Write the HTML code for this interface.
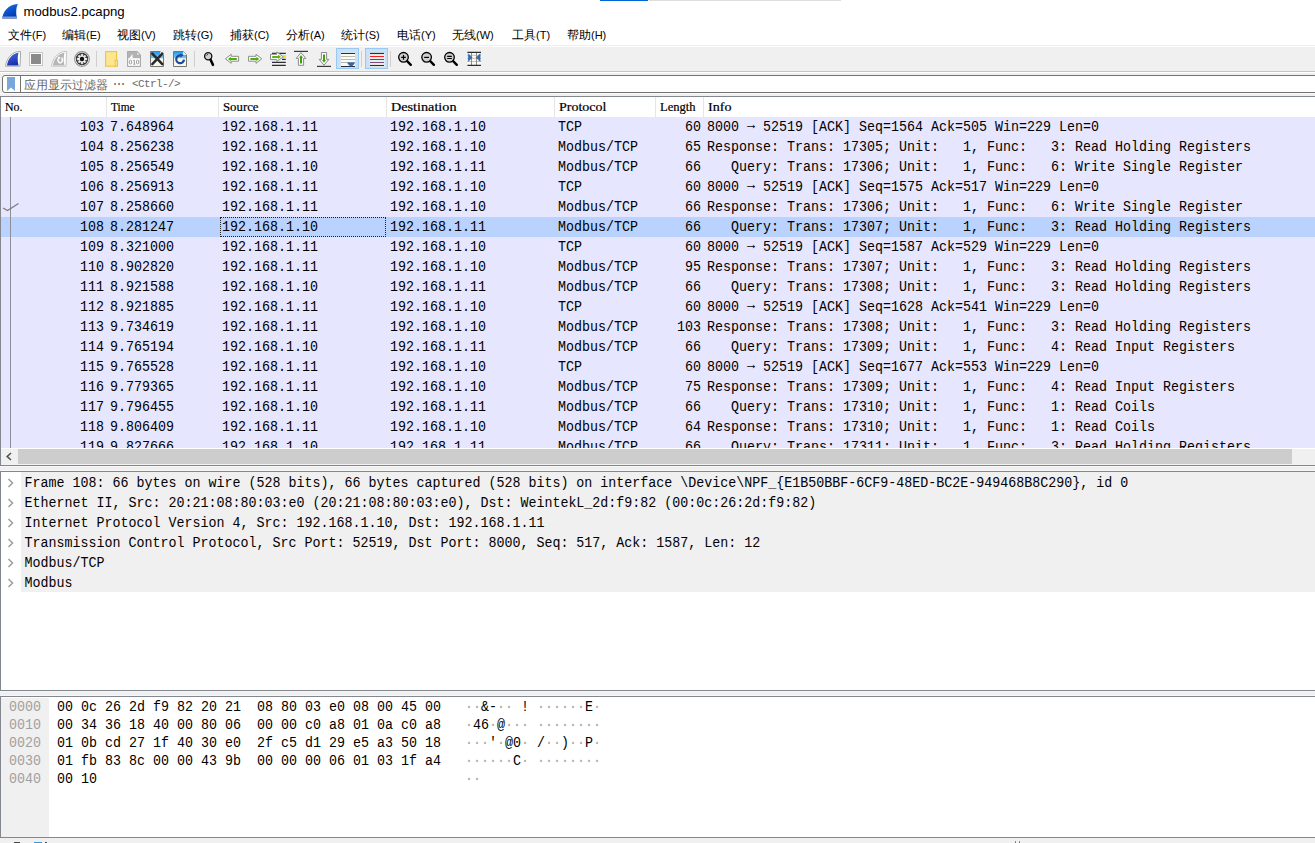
<!DOCTYPE html><html><head><meta charset="utf-8"><title>modbus2.pcapng</title><style>
*{margin:0;padding:0;box-sizing:border-box}
html,body{width:1315px;height:843px;overflow:hidden;background:#fff;position:relative;font-family:"Liberation Sans",sans-serif;color:#000}
.a{position:absolute}
.m{font-family:"Liberation Mono",monospace;white-space:pre}
.menu{top:26px;height:18px;font-size:12px;line-height:18px;white-space:nowrap}
.ph{top:97px;height:20px;font-family:"Liberation Serif",serif;font-size:12px;line-height:20px;transform-origin:0 0;-webkit-text-stroke:0.2px #000;white-space:pre}
.sep{top:97px;width:1px;height:20px;background:#e5e5e5}
.row{left:1px;width:1314px;height:20px;background:#e7e6ff}
.sel{background:#b9d3fe}
.c{font-family:"Liberation Mono",monospace;white-space:pre;font-size:13.33px;line-height:20px;top:0;transform-origin:0 4px;transform:scaleY(1.1)}
.dr{left:21px;width:1294px;height:20px;background:#f0f0f0}
.dt{font-family:"Liberation Mono",monospace;white-space:pre;font-size:13.33px;line-height:20px;left:3.5px;top:1px;transform-origin:0 5px;transform:scaleY(1.1)}
.hx{font-family:"Liberation Mono",monospace;white-space:pre;font-size:13.33px;line-height:18px;transform-origin:0 4px;transform:scaleY(1.1)}
</style></head><body>
<div class="a" style="left:600px;top:0;width:48px;height:1px;background:#0067d0"></div>
<div class="a" style="left:649px;top:0;width:192px;height:1px;background:#dedede"></div>
<svg class="a" style="left:0;top:0" width="22" height="22" viewBox="0 0 22 22"><defs><linearGradient id="fin" x1="0" y1="0" x2="0.6" y2="1"><stop offset="0" stop-color="#1a78e8"/><stop offset="1" stop-color="#0038b0"/></linearGradient><linearGradient id="finb" x1="0" y1="0" x2="0" y2="1"><stop offset="0" stop-color="#5d8ee6" stop-opacity="0"/><stop offset="0.5" stop-color="#7fa2e6"/><stop offset="1" stop-color="#8a92a8"/></linearGradient></defs><path d="M2.2 18.4 C3 11.5 8 4.6 17.8 3.9 C16.2 7 15.6 12 16.9 18.4 Z" fill="url(#fin)"/><path d="M2.6 15.8 H16.7 L16.9 18.4 H2.2 Z" fill="url(#finb)"/></svg>
<div class="a" style="left:23.5px;top:3.6px;font-size:13.2px;line-height:16px;letter-spacing:0">modbus2.pcapng</div>
<div class="a menu" style="left:8px">文件<span style="font-size:11px">(F)</span></div>
<div class="a menu" style="left:62px">编辑<span style="font-size:11px">(E)</span></div>
<div class="a menu" style="left:117px">视图<span style="font-size:11px">(V)</span></div>
<div class="a menu" style="left:173px">跳转<span style="font-size:11px">(G)</span></div>
<div class="a menu" style="left:230px">捕获<span style="font-size:11px">(C)</span></div>
<div class="a menu" style="left:286px">分析<span style="font-size:11px">(A)</span></div>
<div class="a menu" style="left:341px">统计<span style="font-size:11px">(S)</span></div>
<div class="a menu" style="left:397px">电话<span style="font-size:11px">(Y)</span></div>
<div class="a menu" style="left:452px">无线<span style="font-size:11px">(W)</span></div>
<div class="a menu" style="left:512px">工具<span style="font-size:11px">(T)</span></div>
<div class="a menu" style="left:567px">帮助<span style="font-size:11px">(H)</span></div>
<div class="a" style="left:0;top:45px;width:1315px;height:1px;background:#f0f0f0"></div>
<div class="a" style="left:0;top:47px;width:1315px;height:24px;background:#f0f0f0"></div>
<div class="a" style="left:0;top:71px;width:1315px;height:1px;background:#c4c4c4"></div>
<div class="a" style="left:0;top:73px;width:1315px;height:23px;background:#f0f0f0"></div>
<div class="a" style="left:0;top:93px;width:1315px;height:1px;background:#fafafa"></div>
<div class="a" style="left:2px;top:75px;width:1320px;height:18px;background:#fff;border:1px solid #737373;border-radius:3px"></div>
<div class="a" style="left:20px;top:76px;width:1px;height:16px;background:#737373"></div>
<svg class="a" style="left:7px;top:77px" width="9" height="15" viewBox="0 0 9 15"><path d="M0 0H8V14L4 10.5L0 14Z" fill="#79a7dc"/></svg>
<div class="a" style="left:24px;top:77px;font-size:12px;line-height:16px;color:#666;white-space:pre">应用显示过滤器</div>
<div class="a" style="left:113px;top:76px;font-size:12px;line-height:16px;color:#555;white-space:pre">⋯</div>
<div class="a m" style="left:132px;top:76px;font-size:11px;line-height:16px;color:#6a6a6a;letter-spacing:-0.6px">&lt;Ctrl-/&gt;</div>
<svg class="a" style="left:0;top:0" width="500" height="72" viewBox="0 0 500 72">
<defs>
<linearGradient id="bf" x1="0" y1="0" x2="0.3" y2="1"><stop offset="0" stop-color="#4a6ee0"/><stop offset="1" stop-color="#1a30b0"/></linearGradient>
<linearGradient id="sky" x1="0" y1="0" x2="0" y2="1"><stop offset="0" stop-color="#2a9ae8"/><stop offset="1" stop-color="#7ec6f2"/></linearGradient>
</defs>
<!-- 1 shark fin start -->
<path d="M5.5 66.2 C6.5 59 11 53 17.5 51.6 L20.6 51.4 L20.1 66.2 Z" fill="#fff" stroke="#a9a9a9" stroke-width="1"/>
<path d="M7 65.4 C8 59 11.5 54.3 18.6 52.6 C17.4 56.5 17.4 61.5 18.6 65.4 Z" fill="url(#bf)"/>
<!-- 2 stop -->
<rect x="29.5" y="52.5" width="13" height="13" fill="#fff" stroke="#c6c6c6"/>
<rect x="31" y="54" width="10" height="10" fill="#8a8a8a"/>
<!-- 3 restart fin -->
<path d="M51.5 66.2 C52.5 59 57 53 63.5 51.6 L66.6 51.4 L66.1 66.2 Z" fill="#fff" stroke="#c4c4c4" stroke-width="1"/>
<path d="M53 65.4 C54 59 57.5 54.3 64.6 52.6 C63.4 56.5 63.4 61.5 64.6 65.4 Z" fill="#b6b6b6"/>
<path d="M57.9 59.2 C57.4 62.4 60.2 64 62 61.6 C62.6 60.6 62.5 59 61.6 57.6" fill="none" stroke="#fff" stroke-width="1.5"/>
<path d="M57.6 56.4 L60.6 57.6 L58.4 60 Z" fill="#fff"/>
<!-- 4 gear -->
<circle cx="82" cy="59" r="7.4" fill="#fff" stroke="#909090" stroke-width="1.1"/>
<circle cx="82" cy="59" r="6.2" fill="#2e2e2e"/>
<path d="M81.11 56.13 L81.03 54.20 L82.97 54.20 L82.89 56.13 L83.40 56.35 L84.71 54.92 L86.08 56.29 L84.65 57.60 L84.87 58.11 L86.80 58.03 L86.80 59.97 L84.87 59.89 L84.65 60.40 L86.08 61.71 L84.71 63.08 L83.40 61.65 L82.89 61.87 L82.97 63.80 L81.03 63.80 L81.11 61.87 L80.60 61.65 L79.29 63.08 L77.92 61.71 L79.35 60.40 L79.13 59.89 L77.20 59.97 L77.20 58.03 L79.13 58.11 L79.35 57.60 L77.92 56.29 L79.29 54.92 L80.60 56.35 Z" fill="#f0f0f0" stroke="#f0f0f0" stroke-width="0.5" stroke-linejoin="round"/>
<circle cx="82" cy="59" r="2.2" fill="#111"/>
<!-- separators -->
<rect x="96" y="51" width="1" height="16" fill="#cfcfcf"/>
<rect x="194" y="51" width="1" height="16" fill="#cfcfcf"/>
<rect x="361" y="51" width="1" height="16" fill="#cfcfcf"/>
<rect x="390" y="51" width="1" height="16" fill="#cfcfcf"/>
<!-- 5 folder -->
<rect x="105.6" y="51.6" width="11" height="14.6" fill="#fde690" stroke="#ecc540" stroke-width="1.1"/>
<rect x="115.2" y="60.3" width="2.3" height="5.9" fill="#fde690" stroke="#ecc540" stroke-width="1"/>
<!-- 6 file 010 grey -->
<path d="M127.5 51.5 H137.2 L140.5 54.8 V66.5 H127.5 Z" fill="#b2b2b2" stroke="#aaaaaa"/>
<rect x="128.2" y="58.2" width="11.6" height="7.6" fill="#fff"/>
<path d="M129 58.2 C130.5 57 131.5 55.5 132.2 53.8 L132.8 58.2 Z" fill="#fff"/>
<path d="M137.4 52.6 L139.4 54.6 H137.4 Z" fill="#fff"/>
<ellipse cx="130.5" cy="62.1" rx="1.25" ry="1.9" fill="none" stroke="#9c9c9c" stroke-width="1"/><path d="M133.3 60.6 L134.3 60 V64.2 M133.2 64.2 H135.4" stroke="#9c9c9c" stroke-width="1" fill="none"/><ellipse cx="137.6" cy="62.1" rx="1.25" ry="1.9" fill="none" stroke="#9c9c9c" stroke-width="1"/>
<!-- 7 close file -->
<path d="M150.5 51.5 H160.2 L163.5 54.8 V66.5 H150.5 Z" fill="#f9f8e6" stroke="#767676"/>
<path d="M151 52 H160 L163 55 V58.3 H151 Z" fill="url(#sky)"/>
<path d="M160.2 51.8 L163.2 54.8 H160.2 Z" fill="#fff"/>
<path d="M152.3 53.6 L162.3 64.2 M162.3 53.6 L152.3 64.2" stroke="#262a2e" stroke-width="2.5" stroke-linecap="round"/>
<!-- 8 reload -->
<path d="M173.5 51.5 H183.2 L186.5 54.8 V66.5 H173.5 Z" fill="#f9f8e6" stroke="#767676"/>
<path d="M174 52 H183 L186 55 V58.3 H174 Z" fill="url(#sky)"/>
<path d="M183.2 51.8 L186.2 54.8 H183.2 Z" fill="#fff"/>
<path d="M184 59.6 A3.9 3.9 0 1 1 181.3 55.6" fill="none" stroke="#1d4a9c" stroke-width="2.2"/>
<path d="M180.2 53.2 L183.6 55.3 L180.6 57.6 Z" fill="#1d4a9c"/>
<!-- 9 find -->
<circle cx="208.2" cy="56.3" r="3.6" fill="#d2d2d2" stroke="#111" stroke-width="1.3"/>
<path d="M206.4 55.6 A1.8 1.8 0 0 1 208.2 54.4" stroke="#111" stroke-width="0.8" fill="none"/>
<path d="M210.6 59.8 L212.9 64.8" stroke="#000" stroke-width="2.6" stroke-linecap="round"/>
<!-- 10 back -->
<path d="M225.4 58.8 L231.2 54.3 V56.3 H238.6 V61.2 H231.2 V63.3 Z" fill="#fff" stroke="#8a8a8a" stroke-width="1" stroke-linejoin="round"/>
<path d="M228 59 L230.8 56.8 V58 H236.8 V60 H230.8 V61.2 Z" fill="#4caf0c"/>
<!-- 11 forward -->
<path d="M261.8 58.8 L256 54.3 V56.3 H248.6 V61.2 H256 V63.3 Z" fill="#fff" stroke="#8a8a8a" stroke-width="1" stroke-linejoin="round"/>
<path d="M259.2 59 L256.4 56.8 V58 H250.4 V60 H256.4 V61.2 Z" fill="#4caf0c"/>
<!-- 12 go to packet -->
<path d="M272 53.4 H285.8 M282 59.4 H285.8 M272 62.4 H285.8 M272 65.4 H285.8" stroke="#2a2e32" stroke-width="1.2"/>
<rect x="283" y="55.2" width="3" height="2.8" fill="#f5de2a"/>
<path d="M270.5 54.3 H276.8 V51.9 L283.3 56.8 L276.8 61.4 V59.6 H270.5 Z" fill="#fff" stroke="#8a8a8a" stroke-width="1" stroke-linejoin="round"/>
<path d="M272.2 56 H278 V54.8 L281 56.8 L278 59 V58 H272.2 Z" fill="#5cb414"/>
<!-- 13 first packet -->
<path d="M294 51.4 H308" stroke="#3a3a3a" stroke-width="1.2"/>
<path d="M301 52.6 L305.8 58.4 H303.6 V65.3 H298.4 V58.4 H296.2 Z" fill="#fff" stroke="#8a8a8a" stroke-width="1" stroke-linejoin="round"/>
<path d="M301 55 L303 57.8 H302 V63.4 H300 V57.8 H299 Z" fill="#3ea10a"/>
<!-- 14 last packet -->
<path d="M317 66.4 H331" stroke="#3a3a3a" stroke-width="1.2"/>
<path d="M324 65.2 L319.2 59.4 H321.4 V52.5 H326.6 V59.4 H328.8 Z" fill="#fff" stroke="#8a8a8a" stroke-width="1" stroke-linejoin="round"/>
<path d="M324 62.8 L322 60 H323 V54.4 H325 V60 H326 Z" fill="#3ea10a"/>
<!-- 15 autoscroll (checked) -->
<rect x="336.5" y="48.5" width="22" height="20" fill="#c9e0f5" stroke="#99c9f3"/>
<rect x="340.8" y="52.8" width="14.2" height="14.2" fill="#fbfbf6"/>
<path d="M341 53.5 H355 M341 66.5 H355" stroke="#2a2e32" stroke-width="1.2"/>
<path d="M341 56.5 H355 M341 59.5 H355 M341 62.5 H348" stroke="#b9b9ac" stroke-width="1.1"/>
<path d="M347.2 62.2 H355 C354.6 64.6 352.6 65.3 351.8 66.6 H350.4 C349.6 65.3 347.6 64.6 347.2 62.2 Z" fill="#3466a6"/>
<!-- 16 colorize (checked) -->
<rect x="365.5" y="48.5" width="22" height="20" fill="#c9e0f5" stroke="#99c9f3"/>
<rect x="369.8" y="52.8" width="14.6" height="14.2" fill="#fbfbf6"/>
<path d="M370 53.5 H384" stroke="#2a2e32" stroke-width="1.2"/>
<path d="M370 56.5 H384" stroke="#ef2020" stroke-width="1.2"/>
<path d="M370 59.5 H384" stroke="#2f5da0" stroke-width="1.2"/>
<path d="M370 62.5 H384" stroke="#764f7b" stroke-width="1.2"/>
<path d="M370 65.5 H384" stroke="#2a2e32" stroke-width="1.2"/>
<!-- 17 zoom in -->
<circle cx="403.5" cy="57.3" r="4.8" fill="#cfcfcf" stroke="#000" stroke-width="1.3"/>
<path d="M401.2 57.4 H405.8 M403.5 55.1 V59.7" stroke="#000" stroke-width="1.2"/>
<path d="M407.4 61.3 L410.8 64.8" stroke="#000" stroke-width="2.4" stroke-linecap="round"/>
<!-- 18 zoom out -->
<circle cx="426.6" cy="57.3" r="4.8" fill="#cfcfcf" stroke="#000" stroke-width="1.3"/>
<path d="M424.2 57.4 H429" stroke="#000" stroke-width="1.2"/>
<path d="M430.5 61.3 L433.9 64.8" stroke="#000" stroke-width="2.4" stroke-linecap="round"/>
<!-- 19 normal size -->
<circle cx="449.5" cy="57.3" r="4.8" fill="#cfcfcf" stroke="#000" stroke-width="1.3"/>
<path d="M447.2 56.4 H451.8 M447.2 58.5 H451.8" stroke="#000" stroke-width="1.1"/>
<path d="M453.4 61.3 L456.8 64.8" stroke="#000" stroke-width="2.4" stroke-linecap="round"/>
<!-- 20 resize columns -->
<rect x="467.4" y="52.6" width="13.6" height="12.8" fill="#fbfbf4"/>
<path d="M467.4 55.3 H481 M467.4 58.4 H481 M467.4 61.5 H481" stroke="#c4c6b8" stroke-width="1"/>
<path d="M471.5 52 V66 M476.5 52 V66" stroke="#8c8c8c" stroke-width="1"/>
<path d="M467.4 52.4 H481 M467.4 65.4 H481" stroke="#2a2e32" stroke-width="1.2"/>
<path d="M468.3 53.8 L472 57.6 L468.3 61.4 Z" fill="#3468b0" stroke="#3468b0" stroke-width="0.6" stroke-linejoin="round"/>
<path d="M480.1 53.8 L476.3 57.6 L480.1 61.4 Z" fill="#3468b0" stroke="#3468b0" stroke-width="0.6" stroke-linejoin="round"/>
</svg>

<div class="a" style="left:0;top:96px;width:1315px;height:370px;border:1px solid #828790;border-right:none;background:#fff"></div>
<div class="a ph" style="left:5px;transform:scaleX(0.990)">No.</div>
<div class="a ph" style="left:111px;transform:scaleX(0.944)">Time</div>
<div class="a ph" style="left:223px;transform:scaleX(1.065)">Source</div>
<div class="a ph" style="left:391px;transform:scaleX(1.184)">Destination</div>
<div class="a ph" style="left:559px;transform:scaleX(1.168)">Protocol</div>
<div class="a ph" style="left:660px;transform:scaleX(1.045)">Length</div>
<div class="a ph" style="left:708px;transform:scaleX(1.175)">Info</div>
<div class="a sep" style="left:106px"></div>
<div class="a sep" style="left:218px"></div>
<div class="a sep" style="left:386px"></div>
<div class="a sep" style="left:554px"></div>
<div class="a sep" style="left:655px"></div>
<div class="a sep" style="left:703px"></div>
<div class="a" style="left:1px;top:117px;width:1314px;height:331px;overflow:hidden">
<div class="a row" style="left:0;top:0px">
<div class="a c" style="right:1211px;text-align:right">103</div>
<div class="a c" style="left:109px">7.648964</div>
<div class="a c" style="left:221px">192.168.1.11</div>
<div class="a c" style="left:389px">192.168.1.10</div>
<div class="a c" style="left:557px">TCP</div>
<div class="a c" style="right:614px;text-align:right">60</div>
<div class="a c" style="left:706px">8000 <span style="position:relative;top:-2px">→</span> 52519 [ACK] Seq=1564 Ack=505 Win=229 Len=0</div>
</div>
<div class="a row" style="left:0;top:20px">
<div class="a c" style="right:1211px;text-align:right">104</div>
<div class="a c" style="left:109px">8.256238</div>
<div class="a c" style="left:221px">192.168.1.11</div>
<div class="a c" style="left:389px">192.168.1.10</div>
<div class="a c" style="left:557px">Modbus/TCP</div>
<div class="a c" style="right:614px;text-align:right">65</div>
<div class="a c" style="left:706px">Response: Trans: 17305; Unit:   1, Func:   3: Read Holding Registers</div>
</div>
<div class="a row" style="left:0;top:40px">
<div class="a c" style="right:1211px;text-align:right">105</div>
<div class="a c" style="left:109px">8.256549</div>
<div class="a c" style="left:221px">192.168.1.10</div>
<div class="a c" style="left:389px">192.168.1.11</div>
<div class="a c" style="left:557px">Modbus/TCP</div>
<div class="a c" style="right:614px;text-align:right">66</div>
<div class="a c" style="left:706px">   Query: Trans: 17306; Unit:   1, Func:   6: Write Single Register</div>
</div>
<div class="a row" style="left:0;top:60px">
<div class="a c" style="right:1211px;text-align:right">106</div>
<div class="a c" style="left:109px">8.256913</div>
<div class="a c" style="left:221px">192.168.1.11</div>
<div class="a c" style="left:389px">192.168.1.10</div>
<div class="a c" style="left:557px">TCP</div>
<div class="a c" style="right:614px;text-align:right">60</div>
<div class="a c" style="left:706px">8000 <span style="position:relative;top:-2px">→</span> 52519 [ACK] Seq=1575 Ack=517 Win=229 Len=0</div>
</div>
<div class="a row" style="left:0;top:80px">
<div class="a c" style="right:1211px;text-align:right">107</div>
<div class="a c" style="left:109px">8.258660</div>
<div class="a c" style="left:221px">192.168.1.11</div>
<div class="a c" style="left:389px">192.168.1.10</div>
<div class="a c" style="left:557px">Modbus/TCP</div>
<div class="a c" style="right:614px;text-align:right">66</div>
<div class="a c" style="left:706px">Response: Trans: 17306; Unit:   1, Func:   6: Write Single Register</div>
</div>
<div class="a row sel" style="left:0;top:100px">
<div class="a c" style="right:1211px;text-align:right">108</div>
<div class="a c" style="left:109px">8.281247</div>
<div class="a c" style="left:221px">192.168.1.10</div>
<div class="a c" style="left:389px">192.168.1.11</div>
<div class="a c" style="left:557px">Modbus/TCP</div>
<div class="a c" style="right:614px;text-align:right">66</div>
<div class="a c" style="left:706px">   Query: Trans: 17307; Unit:   1, Func:   3: Read Holding Registers</div>
</div>
<div class="a row" style="left:0;top:120px">
<div class="a c" style="right:1211px;text-align:right">109</div>
<div class="a c" style="left:109px">8.321000</div>
<div class="a c" style="left:221px">192.168.1.11</div>
<div class="a c" style="left:389px">192.168.1.10</div>
<div class="a c" style="left:557px">TCP</div>
<div class="a c" style="right:614px;text-align:right">60</div>
<div class="a c" style="left:706px">8000 <span style="position:relative;top:-2px">→</span> 52519 [ACK] Seq=1587 Ack=529 Win=229 Len=0</div>
</div>
<div class="a row" style="left:0;top:140px">
<div class="a c" style="right:1211px;text-align:right">110</div>
<div class="a c" style="left:109px">8.902820</div>
<div class="a c" style="left:221px">192.168.1.11</div>
<div class="a c" style="left:389px">192.168.1.10</div>
<div class="a c" style="left:557px">Modbus/TCP</div>
<div class="a c" style="right:614px;text-align:right">95</div>
<div class="a c" style="left:706px">Response: Trans: 17307; Unit:   1, Func:   3: Read Holding Registers</div>
</div>
<div class="a row" style="left:0;top:160px">
<div class="a c" style="right:1211px;text-align:right">111</div>
<div class="a c" style="left:109px">8.921588</div>
<div class="a c" style="left:221px">192.168.1.10</div>
<div class="a c" style="left:389px">192.168.1.11</div>
<div class="a c" style="left:557px">Modbus/TCP</div>
<div class="a c" style="right:614px;text-align:right">66</div>
<div class="a c" style="left:706px">   Query: Trans: 17308; Unit:   1, Func:   3: Read Holding Registers</div>
</div>
<div class="a row" style="left:0;top:180px">
<div class="a c" style="right:1211px;text-align:right">112</div>
<div class="a c" style="left:109px">8.921885</div>
<div class="a c" style="left:221px">192.168.1.11</div>
<div class="a c" style="left:389px">192.168.1.10</div>
<div class="a c" style="left:557px">TCP</div>
<div class="a c" style="right:614px;text-align:right">60</div>
<div class="a c" style="left:706px">8000 <span style="position:relative;top:-2px">→</span> 52519 [ACK] Seq=1628 Ack=541 Win=229 Len=0</div>
</div>
<div class="a row" style="left:0;top:200px">
<div class="a c" style="right:1211px;text-align:right">113</div>
<div class="a c" style="left:109px">9.734619</div>
<div class="a c" style="left:221px">192.168.1.11</div>
<div class="a c" style="left:389px">192.168.1.10</div>
<div class="a c" style="left:557px">Modbus/TCP</div>
<div class="a c" style="right:614px;text-align:right">103</div>
<div class="a c" style="left:706px">Response: Trans: 17308; Unit:   1, Func:   3: Read Holding Registers</div>
</div>
<div class="a row" style="left:0;top:220px">
<div class="a c" style="right:1211px;text-align:right">114</div>
<div class="a c" style="left:109px">9.765194</div>
<div class="a c" style="left:221px">192.168.1.10</div>
<div class="a c" style="left:389px">192.168.1.11</div>
<div class="a c" style="left:557px">Modbus/TCP</div>
<div class="a c" style="right:614px;text-align:right">66</div>
<div class="a c" style="left:706px">   Query: Trans: 17309; Unit:   1, Func:   4: Read Input Registers</div>
</div>
<div class="a row" style="left:0;top:240px">
<div class="a c" style="right:1211px;text-align:right">115</div>
<div class="a c" style="left:109px">9.765528</div>
<div class="a c" style="left:221px">192.168.1.11</div>
<div class="a c" style="left:389px">192.168.1.10</div>
<div class="a c" style="left:557px">TCP</div>
<div class="a c" style="right:614px;text-align:right">60</div>
<div class="a c" style="left:706px">8000 <span style="position:relative;top:-2px">→</span> 52519 [ACK] Seq=1677 Ack=553 Win=229 Len=0</div>
</div>
<div class="a row" style="left:0;top:260px">
<div class="a c" style="right:1211px;text-align:right">116</div>
<div class="a c" style="left:109px">9.779365</div>
<div class="a c" style="left:221px">192.168.1.11</div>
<div class="a c" style="left:389px">192.168.1.10</div>
<div class="a c" style="left:557px">Modbus/TCP</div>
<div class="a c" style="right:614px;text-align:right">75</div>
<div class="a c" style="left:706px">Response: Trans: 17309; Unit:   1, Func:   4: Read Input Registers</div>
</div>
<div class="a row" style="left:0;top:280px">
<div class="a c" style="right:1211px;text-align:right">117</div>
<div class="a c" style="left:109px">9.796455</div>
<div class="a c" style="left:221px">192.168.1.10</div>
<div class="a c" style="left:389px">192.168.1.11</div>
<div class="a c" style="left:557px">Modbus/TCP</div>
<div class="a c" style="right:614px;text-align:right">66</div>
<div class="a c" style="left:706px">   Query: Trans: 17310; Unit:   1, Func:   1: Read Coils</div>
</div>
<div class="a row" style="left:0;top:300px">
<div class="a c" style="right:1211px;text-align:right">118</div>
<div class="a c" style="left:109px">9.806409</div>
<div class="a c" style="left:221px">192.168.1.11</div>
<div class="a c" style="left:389px">192.168.1.10</div>
<div class="a c" style="left:557px">Modbus/TCP</div>
<div class="a c" style="right:614px;text-align:right">64</div>
<div class="a c" style="left:706px">Response: Trans: 17310; Unit:   1, Func:   1: Read Coils</div>
</div>
<div class="a row" style="left:0;top:320px">
<div class="a c" style="right:1211px;text-align:right">119</div>
<div class="a c" style="left:109px">9.827666</div>
<div class="a c" style="left:221px">192.168.1.10</div>
<div class="a c" style="left:389px">192.168.1.11</div>
<div class="a c" style="left:557px">Modbus/TCP</div>
<div class="a c" style="right:614px;text-align:right">66</div>
<div class="a c" style="left:706px">   Query: Trans: 17311; Unit:   1, Func:   3: Read Holding Registers</div>
</div>
<div class="a" style="left:9px;top:0;width:1px;height:331px;background:#8a9099"></div>
</div>
<div class="a" style="left:220px;top:217px;width:166px;height:20px;border:1px dotted #222"></div>
<svg class="a" style="left:2px;top:202px" width="18" height="10" viewBox="0 0 18 10"><path d="M1 6 L5.5 8.5 L16.5 1.5" stroke="#7a7a7a" stroke-width="1.1" fill="none"/></svg>
<div class="a" style="left:1px;top:449px;width:1314px;height:15px;background:#f0f0f0"></div>
<div class="a" style="left:18px;top:449px;width:1274px;height:15px;background:#cdcdcd"></div>
<svg class="a" style="left:5px;top:452px" width="8" height="9" viewBox="0 0 8 9"><path d="M6 1 L2.2 4.5 L6 8" stroke="#505050" stroke-width="1.6" fill="none"/></svg>
<div class="a" style="left:1px;top:464px;width:1314px;height:1px;background:#f3f3f3"></div>
<div class="a" style="left:0;top:465px;width:1315px;height:1px;background:#828790"></div>
<div class="a" style="left:0;top:466px;width:1315px;height:5px;background:#f0f0f0;border-top:1px solid #f6f6f6;border-bottom:1px solid #f6f6f6"></div>
<div class="a" style="left:0;top:471px;width:1315px;height:220px;border:1px solid #828790;border-right:none;background:#fff"></div>
<div class="a dr" style="top:472px"><div class="a dt">Frame 108: 66 bytes on wire (528 bits), 66 bytes captured (528 bits) on interface \Device\NPF_{E1B50BBF-6CF9-48ED-BC2E-949468B8C290}, id 0</div></div>
<svg class="a" style="left:7px;top:478px" width="7" height="10" viewBox="0 0 7 10"><path d="M1.5 1 L5.5 5 L1.5 9" stroke="#a0a0a0" stroke-width="1.6" fill="none"/></svg>
<div class="a dr" style="top:492px"><div class="a dt">Ethernet II, Src: 20:21:08:80:03:e0 (20:21:08:80:03:e0), Dst: WeintekL_2d:f9:82 (00:0c:26:2d:f9:82)</div></div>
<svg class="a" style="left:7px;top:498px" width="7" height="10" viewBox="0 0 7 10"><path d="M1.5 1 L5.5 5 L1.5 9" stroke="#a0a0a0" stroke-width="1.6" fill="none"/></svg>
<div class="a dr" style="top:512px"><div class="a dt">Internet Protocol Version 4, Src: 192.168.1.10, Dst: 192.168.1.11</div></div>
<svg class="a" style="left:7px;top:518px" width="7" height="10" viewBox="0 0 7 10"><path d="M1.5 1 L5.5 5 L1.5 9" stroke="#a0a0a0" stroke-width="1.6" fill="none"/></svg>
<div class="a dr" style="top:532px"><div class="a dt">Transmission Control Protocol, Src Port: 52519, Dst Port: 8000, Seq: 517, Ack: 1587, Len: 12</div></div>
<svg class="a" style="left:7px;top:538px" width="7" height="10" viewBox="0 0 7 10"><path d="M1.5 1 L5.5 5 L1.5 9" stroke="#a0a0a0" stroke-width="1.6" fill="none"/></svg>
<div class="a dr" style="top:552px"><div class="a dt">Modbus/TCP</div></div>
<svg class="a" style="left:7px;top:558px" width="7" height="10" viewBox="0 0 7 10"><path d="M1.5 1 L5.5 5 L1.5 9" stroke="#a0a0a0" stroke-width="1.6" fill="none"/></svg>
<div class="a dr" style="top:572px"><div class="a dt">Modbus</div></div>
<svg class="a" style="left:7px;top:578px" width="7" height="10" viewBox="0 0 7 10"><path d="M1.5 1 L5.5 5 L1.5 9" stroke="#a0a0a0" stroke-width="1.6" fill="none"/></svg>
<div class="a" style="left:0;top:691px;width:1315px;height:5px;background:#f0f0f0;border-top:1px solid #f6f6f6;border-bottom:1px solid #f6f6f6"></div>
<div class="a" style="left:0;top:696px;width:1315px;height:142px;border:1px solid #828790;border-right:none;background:#fff"></div>
<div class="a" style="left:1px;top:698px;width:48px;height:139px;background:#f0f0f0"></div>
<div class="a hx" style="left:9px;top:698px;color:#a0a0a0">0000</div>
<div class="a hx" style="left:57px;top:698px">00 0c 26 2d f9 82 20 21  08 80 03 e0 08 00 45 00</div>
<div class="a hx" style="left:465px;top:698px"><span style="color:#a8a8a8">·</span><span style="color:#a8a8a8">·</span>&amp;-<span style="color:#a8a8a8">·</span><span style="color:#a8a8a8">·</span> ! <span style="color:#a8a8a8">·</span><span style="color:#a8a8a8">·</span><span style="color:#a8a8a8">·</span><span style="color:#a8a8a8">·</span><span style="color:#a8a8a8">·</span><span style="color:#a8a8a8">·</span>E<span style="color:#a8a8a8">·</span></div>
<div class="a hx" style="left:9px;top:716px;color:#a0a0a0">0010</div>
<div class="a hx" style="left:57px;top:716px">00 34 36 18 40 00 80 06  00 00 c0 a8 01 0a c0 a8</div>
<div class="a hx" style="left:465px;top:716px"><span style="color:#a8a8a8">·</span>46<span style="color:#a8a8a8">·</span>@<span style="color:#a8a8a8">·</span><span style="color:#a8a8a8">·</span><span style="color:#a8a8a8">·</span> <span style="color:#a8a8a8">·</span><span style="color:#a8a8a8">·</span><span style="color:#a8a8a8">·</span><span style="color:#a8a8a8">·</span><span style="color:#a8a8a8">·</span><span style="color:#a8a8a8">·</span><span style="color:#a8a8a8">·</span><span style="color:#a8a8a8">·</span></div>
<div class="a hx" style="left:9px;top:734px;color:#a0a0a0">0020</div>
<div class="a hx" style="left:57px;top:734px">01 0b cd 27 1f 40 30 e0  2f c5 d1 29 e5 a3 50 18</div>
<div class="a hx" style="left:465px;top:734px"><span style="color:#a8a8a8">·</span><span style="color:#a8a8a8">·</span><span style="color:#a8a8a8">·</span>&#x27;<span style="color:#a8a8a8">·</span>@0<span style="color:#a8a8a8">·</span> /<span style="color:#a8a8a8">·</span><span style="color:#a8a8a8">·</span>)<span style="color:#a8a8a8">·</span><span style="color:#a8a8a8">·</span>P<span style="color:#a8a8a8">·</span></div>
<div class="a hx" style="left:9px;top:752px;color:#a0a0a0">0030</div>
<div class="a hx" style="left:57px;top:752px">01 fb 83 8c 00 00 43 9b  00 00 00 06 01 03 1f a4</div>
<div class="a hx" style="left:465px;top:752px"><span style="color:#a8a8a8">·</span><span style="color:#a8a8a8">·</span><span style="color:#a8a8a8">·</span><span style="color:#a8a8a8">·</span><span style="color:#a8a8a8">·</span><span style="color:#a8a8a8">·</span>C<span style="color:#a8a8a8">·</span> <span style="color:#a8a8a8">·</span><span style="color:#a8a8a8">·</span><span style="color:#a8a8a8">·</span><span style="color:#a8a8a8">·</span><span style="color:#a8a8a8">·</span><span style="color:#a8a8a8">·</span><span style="color:#a8a8a8">·</span><span style="color:#a8a8a8">·</span></div>
<div class="a hx" style="left:9px;top:770px;color:#a0a0a0">0040</div>
<div class="a hx" style="left:57px;top:770px">00 10</div>
<div class="a hx" style="left:465px;top:770px"><span style="color:#a8a8a8">·</span><span style="color:#a8a8a8">·</span></div>
<div class="a" style="left:0;top:838px;width:1315px;height:5px;background:#f0f0f0"></div>
<div class="a" style="left:14px;top:842px;width:6px;height:1px;background:#4a4a4a"></div>
<div class="a" style="left:34px;top:842px;width:8px;height:1px;background:#3a98d6"></div>
<div class="a" style="left:45px;top:842px;width:2px;height:1px;background:#505050"></div>
<div class="a" style="left:1015px;top:841px;width:1px;height:2px;background:#858585"></div>
<div class="a" style="left:1019px;top:841px;width:1px;height:2px;background:#858585"></div>
</body></html>
